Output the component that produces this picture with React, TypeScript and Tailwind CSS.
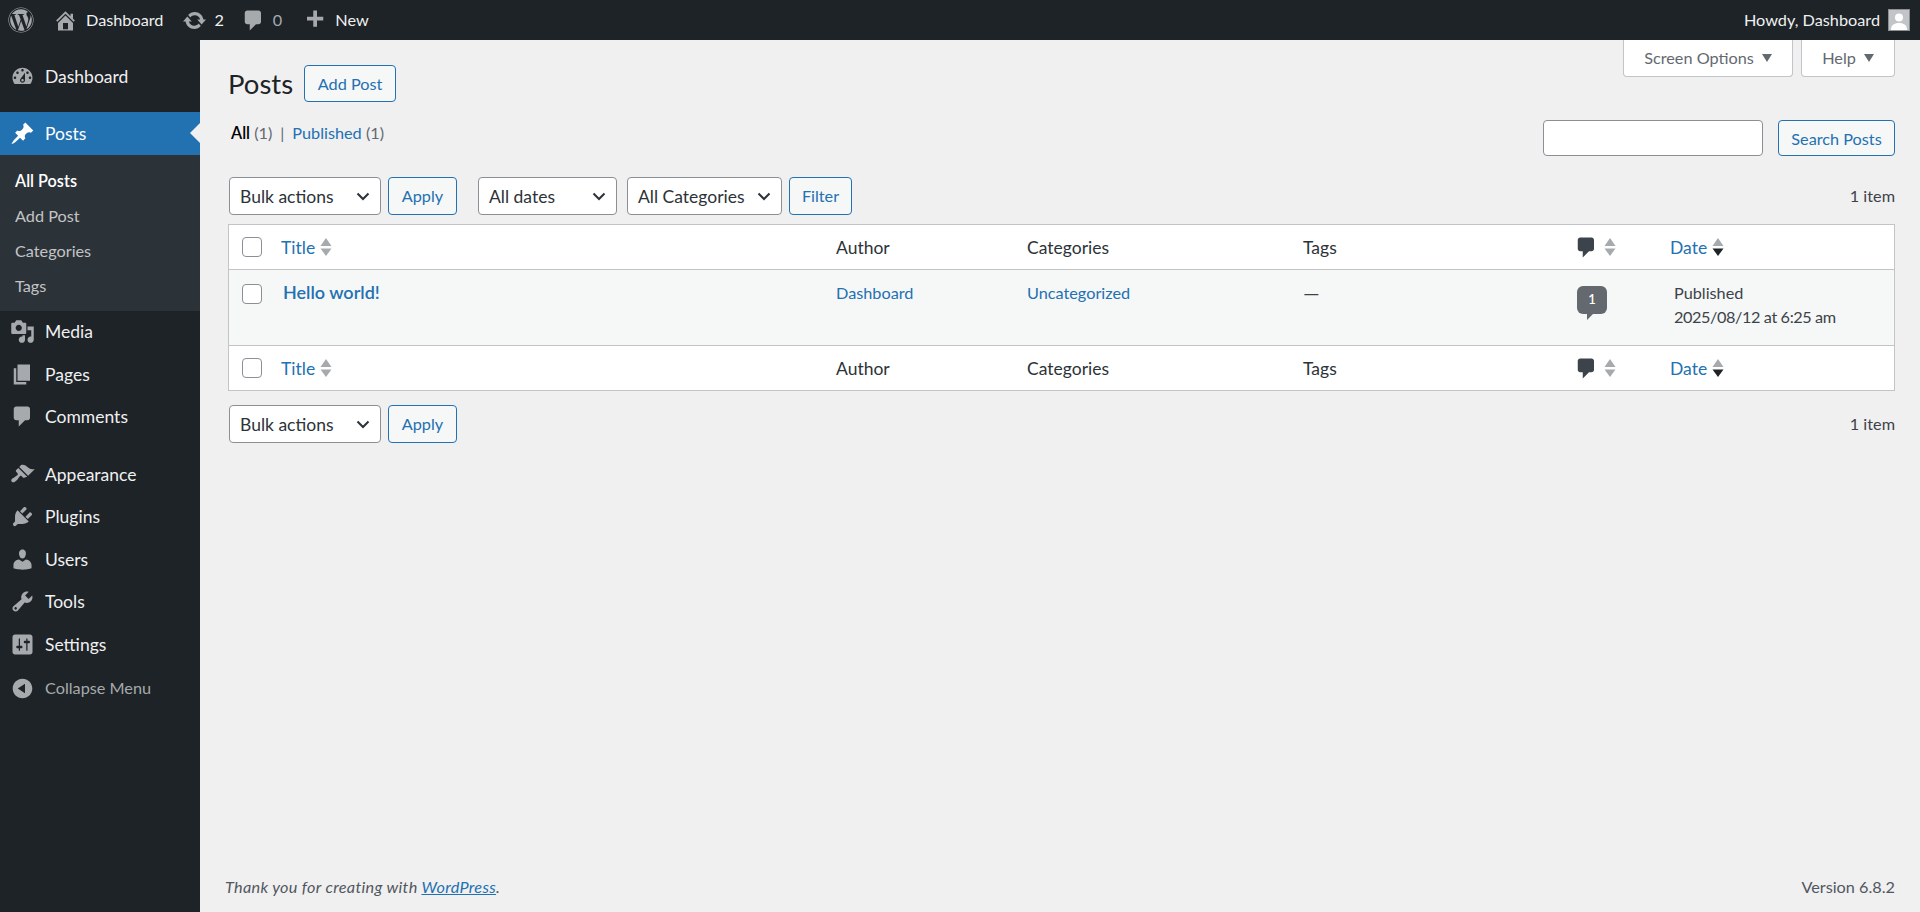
import React from 'react';
import { FaWordpress } from 'react-icons/fa';

// dashicons paths, 20x20 grid
const icons = {
  dashboard: 'M3.76 16h12.48c1.1-1.37 1.76-3.11 1.76-5 0-4.42-3.58-8-8-8s-8 3.58-8 8c0 1.89.66 3.63 1.76 5zM10 4c.55 0 1 .45 1 1s-.45 1-1 1-1-.45-1-1 .45-1 1-1zM6 6c.55 0 1 .45 1 1s-.45 1-1 1-1-.45-1-1 .45-1 1-1zm8 0c.55 0 1 .45 1 1s-.45 1-1 1-1-.45-1-1 .45-1 1-1zm-5.37 5.55L12 7v6c0 1.1-.9 2-2 2s-2-.9-2-2c0-.57.24-1.08.63-1.45zM4 10c.55 0 1 .45 1 1s-.45 1-1 1-1-.45-1-1 .45-1 1-1zm12 0c.55 0 1 .45 1 1s-.45 1-1 1-1-.45-1-1 .45-1 1-1zm-5 3c0-.55-.45-1-1-1s-1 .45-1 1 .45 1 1 1 1-.45 1-1z',
  post: 'M10.44 3.02l1.82-1.82 6.36 6.35-1.83 1.82c-1.05-.68-2.48-.57-3.41.36l-.75.75c-.92.93-1.04 2.35-.35 3.41l-1.83 1.82-2.41-2.41-2.8 2.79c-.42.42-3.38 2.71-3.8 2.29s1.86-3.39 2.28-3.81l2.79-2.79L4.1 9.36l1.83-1.82c1.05.69 2.48.57 3.4-.36l.75-.75c.93-.92 1.05-2.35.36-3.41z',
  media: 'M13 11V4c0-.55-.45-1-1-1h-1.67L9 1H5L3.67 3H2c-.55 0-1 .45-1 1v7c0 .55.45 1 1 1h10c.55 0 1-.45 1-1zM7 4.5c1.38 0 2.5 1.12 2.5 2.5S8.38 9.5 7 9.5 4.5 8.38 4.5 7 5.62 4.5 7 4.5zM14 6h5v10.5c0 1.38-1.12 2.5-2.5 2.5S14 17.88 14 16.5s1.12-2.5 2.5-2.5c.17 0 .34.02.5.05V9h-3V6zm-4 8.05V13h2v3.5c0 1.38-1.12 2.5-2.5 2.5S7 17.88 7 16.5 8.12 14 9.5 14c.17 0 .34.02.5.05z',
  page: 'M6 15V2h10v13H6zm-1 1h8v2H3V5h2v11z',
  comment: 'M5 2h9c1.1 0 2 .9 2 2v7c0 1.1-.9 2-2 2h-2l-5 5v-5H5c-1.1 0-2-.9-2-2V4c0-1.1.9-2 2-2z',
  appearance: 'M14.48 11.06L7.41 3.99l1.5-1.5c.5-.56 2.3-.47 3.51.32 1.21.8 1.43 1.28 2.91 2.1 1.18.64 2.45 1.26 4.45.85zm-.71.71L6.7 4.7 4.93 6.47c-.39.39-.39 1.02 0 1.41l1.06 1.06c.39.39.39 1.03 0 1.42-.6.6-1.43 1.11-2.21 1.69-.35.26-.7.53-1.01.84C1.43 13.23.4 14.75 1.5 15.85c1.08 1.08 2.57.03 3.9-1.26.31-.31.58-.66.85-1.02.57-.78 1.08-1.61 1.69-2.21.39-.39 1.02-.39 1.41 0l1.06 1.06c.39.39 1.02.39 1.41 0z',
  plugins: 'M13.11 4.36L9.87 7.6 8 5.73l3.24-3.24c.35-.34 1.05-.2 1.56.32.52.51.66 1.21.31 1.55zm-8 1.77l.91-1.12 9.01 9.01-1.19.84c-.71.71-2.63 1.16-3.82 1.16H6.14L4.9 17.26c-.59.59-1.54.59-2.12 0-.59-.58-.59-1.53 0-2.12l1.24-1.24v-3.88c0-1.13.4-3.19 1.09-3.89zm7.26 3.97l3.24-3.24c.34-.35 1.04-.21 1.55.31.52.51.66 1.21.31 1.55l-3.24 3.25z',
  users: 'M10 9.25c-2.27 0-2.73-3.44-2.73-3.44C7 4.02 7.82 2 9.97 2c2.16 0 2.98 2.02 2.71 3.81 0 0-.41 3.44-2.68 3.44zm0 2.57L12.72 10c2.39 0 4.52 2.33 4.52 4.53v2.49s-3.65 1.13-7.24 1.13c-3.65 0-7.24-1.13-7.24-1.13v-2.49c0-2.25 1.94-4.48 4.47-4.48z',
  tools: 'M16.68 9.77c-1.34 1.34-3.3 1.67-4.95.99l-5.41 6.52c-.99.99-2.59.99-3.58 0s-.99-2.59 0-3.57l6.52-5.42c-.68-1.65-.35-3.61.99-4.95 1.28-1.28 3.12-1.62 4.72-1.06l-2.89 2.89 2.82 2.82 2.86-2.87c.53 1.58.18 3.39-1.08 4.65zM3.81 16.21c.4.39 1.04.39 1.43 0 .4-.4.4-1.04 0-1.43-.39-.4-1.03-.4-1.43 0-.39.39-.39 1.03 0 1.43z',
  settings: 'M18 16V4c0-1.1-.9-2-2-2H4c-1.1 0-2 .9-2 2v12c0 1.1.9 2 2 2h12c1.1 0 2-.9 2-2zM8 11h1c.55 0 1 .45 1 1s-.45 1-1 1H8v1.5c0 .28-.22.5-.5.5s-.5-.22-.5-.5V13H6c-.55 0-1-.45-1-1s.45-1 1-1h1V5.5c0-.28.22-.5.5-.5s.5.22.5.5V11zm5-2h-1c-.55 0-1-.45-1-1s.45-1 1-1h1V5.5c0-.28.22-.5.5-.5s.5.22.5.5V7h1c.55 0 1 .45 1 1s-.45 1-1 1h-1v5.5c0 .28-.22.5-.5.5s-.5-.22-.5-.5V9z',
  collapse: 'M10 2.16c4.33 0 7.84 3.51 7.84 7.84s-3.51 7.84-7.84 7.84S2.16 14.33 2.16 10 5.71 2.16 10 2.16zm2 11.72V6.12L6.18 9.97z',
  home: 'M16 8.5l1.53 1.53-1.06 1.06L10 4.62l-6.47 6.47-1.06-1.06L10 2.5l4 4v-2h2v4zm-6-2.46l6 5.99V18H4v-5.97zM12 17v-5H8v5h4z',
  update: 'M10.2 3.28c3.53 0 6.43 2.61 6.92 6h2.08l-3.5 4-3.5-4h2.32c-.45-1.97-2.21-3.45-4.32-3.45-1.45 0-2.73.71-3.54 1.78L4.95 5.66C6.23 4.2 8.11 3.28 10.2 3.28zm-.4 13.44c-3.52 0-6.43-2.61-6.92-6H.8l3.5-4c1.17 1.33 2.33 2.67 3.5 4H5.48c.45 1.97 2.21 3.45 4.32 3.45 1.45 0 2.73-.71 3.54-1.78l1.71 1.95c-1.28 1.46-3.15 2.38-5.25 2.38z',
  plus: 'M17 7v3h-5v5H9v-5H4V7h5V2h3v5h5z',
};

const Dashicon = ({ name, className }: { name: keyof typeof icons; className?: string }) => (
  <svg viewBox="0 0 20 20" fill="currentColor" className={className}>
    <path d={icons[name]} />
  </svg>
);

const menuTop: { icon: keyof typeof icons; label: string }[][] = [
  [
    { icon: 'media', label: 'Media' },
    { icon: 'page', label: 'Pages' },
    { icon: 'comment', label: 'Comments' },
  ],
  [
    { icon: 'appearance', label: 'Appearance' },
    { icon: 'plugins', label: 'Plugins' },
    { icon: 'users', label: 'Users' },
    { icon: 'tools', label: 'Tools' },
    { icon: 'settings', label: 'Settings' },
  ],
];

const MenuItem = ({ icon, label }: { icon: keyof typeof icons; label: string }) => (
  <div className="flex h-[42.5px] items-center gap-[10px] pl-[10px] text-[17.5px] text-[#f0f0f1]">
    <Dashicon name={icon} className="h-[25px] w-[25px] shrink-0 text-[#a7aaad]" />
    <span className="mt-[1px]">{label}</span>
  </div>
);

function AdminBar() {
  return (
    <header className="flex h-10 shrink-0 items-center justify-between bg-[#1d2327] text-[16.25px] text-[#f0f0f1]">
      <div className="flex items-center">
        <FaWordpress className="ml-[8px] h-[26px] w-[26px] text-[#a7aaad]" />
        <Dashicon name="home" className="ml-[19px] h-[25px] w-[25px] text-[#a7aaad]" />
        <span className="ml-[8px]">Dashboard</span>
        <Dashicon name="update" className="ml-[19px] h-[25px] w-[25px] text-[#a7aaad]" />
        <span className="ml-[7px]">2</span>
        <Dashicon name="comment" className="ml-[17px] h-[25px] w-[25px] text-[#a7aaad]" />
        <span className="ml-[7px] text-[#a7aaad]">0</span>
        <Dashicon name="plus" className="ml-[20px] h-[25px] w-[25px] text-[#a7aaad]" />
        <span className="ml-[8px]">New</span>
      </div>
      <div className="mr-[10px] flex items-center gap-[8px]">
        <span>Howdy, Dashboard</span>
        <div className="flex h-[22px] w-[22px] items-end justify-center overflow-hidden border border-[#8c8f94] bg-[#c3c4c7]">
          <svg viewBox="0 0 20 20" fill="#ffffff" className="h-[20px] w-[20px]">
            <circle cx="10" cy="7.5" r="4" />
            <path d="M2 20c0-5 3-7 8-7s8 2 8 7z" />
          </svg>
        </div>
      </div>
    </header>
  );
}

function Sidebar() {
  return (
    <aside className="flex w-[200px] shrink-0 flex-col bg-[#1d2327] pt-[15px]">
      <MenuItem icon="dashboard" label="Dashboard" />
      <div className="mt-[14.5px] flex h-[42.5px] items-center gap-[10px] bg-[#2271b1] pl-[10px] text-[17.5px] text-white">
        <Dashicon name="post" className="h-[25px] w-[25px] shrink-0" />
        <span className="mt-[1px]">Posts</span>
        <div className="ml-auto h-0 w-0 border-y-[10px] border-r-[10px] border-y-transparent border-r-[#f0f0f1]" />
      </div>
      <div className="h-[156px] bg-[#2c3338] pt-[8px] text-[16.25px] leading-[35.3px] text-[#c3c4c7]">
        <div className="pl-[15px] font-semibold text-white">All Posts</div>
        <div className="pl-[15px]">Add Post</div>
        <div className="pl-[15px]">Categories</div>
        <div className="pl-[15px]">Tags</div>
      </div>
      {menuTop[0].map((m) => (
        <MenuItem key={m.label} {...m} />
      ))}
      <div className="h-[15px]" />
      {menuTop[1].map((m) => (
        <MenuItem key={m.label} {...m} />
      ))}
      <div className="flex h-[45px] items-center gap-[10px] pl-[10px] text-[16.25px] text-[#a7aaad]">
        <Dashicon name="collapse" className="h-[25px] w-[25px] shrink-0" />
        <span>Collapse Menu</span>
      </div>
    </aside>
  );
}

const OutlineButton = ({ children, className }: { children: React.ReactNode; className: string }) => (
  <button className={`flex items-center justify-center rounded-[4px] border border-[#2271b1] bg-[#f6f7f7] text-[16.25px] text-[#2271b1] ${className}`}>
    {children}
  </button>
);

const Dropdown = ({ label, width }: { label: string; width: string }) => (
  <div className={`flex h-[38px] items-center justify-between rounded-[4px] border border-[#8c8f94] bg-white pl-[10px] pr-[9px] text-[17.5px] text-[#2c3338] ${width}`}>
    <span className="mt-[2px]">{label}</span>
    <svg viewBox="0 0 16 16" fill="none" stroke="#2c3338" strokeWidth="2" className="h-[16px] w-[16px]">
      <path d="M2.5 5.500L8 11l5.500-5.500" />
    </svg>
  </div>
);

const SortArrows = ({ active }: { active?: boolean }) => (
  <svg viewBox="0 0 12 18" className="ml-[5px] h-[18px] w-[12px]">
    <path d="M.5 8L6 0l5.500 8z" fill="#a7aaad" />
    <path d="M.5 10.500h11l-5.500 7.500z" fill={active ? '#1d2327' : '#a7aaad'} />
  </svg>
);

const Checkbox = () => <div className="h-[20px] w-[20px] rounded-[4px] border border-[#8c8f94] bg-white" />;

const grid = 'grid grid-cols-[41px_555px_191px_276px_274px_95px_1fr]';

const HeadRow = ({ className }: { className: string }) => (
  <div className={`${grid} h-[45px] items-center bg-white text-[16.25px] text-[#2c3338] ${className}`}>
    <div className="pl-[13px]">
      <Checkbox />
    </div>
    <div className="flex items-center pl-[11px] text-[17.5px] text-[#2271b1]">
      <span className="mt-[2px]">Title</span>
      <SortArrows />
    </div>
    <div className="mt-[2px] pl-[11px] text-[17.5px]">Author</div>
    <div className="mt-[2px] pl-[11px] text-[17.5px]">Categories</div>
    <div className="mt-[2px] pl-[11px] text-[17.5px]">Tags</div>
    <div className="flex items-center pl-[8px]">
      <Dashicon name="comment" className="h-[25px] w-[25px] text-[#3c434a]" />
      <SortArrows />
    </div>
    <div className="flex items-center pl-[9px] text-[17.5px] text-[#2271b1]">
      <span className="mt-[2px]">Date</span>
      <SortArrows active />
    </div>
  </div>
);

const BulkBar = () => (
  <div className="flex items-center gap-[7px]">
    <Dropdown label="Bulk actions" width="w-[152px]" />
    <OutlineButton className="h-[38px] w-[69px]">Apply</OutlineButton>
  </div>
);

export default function App() {
  return (
    <div className="flex h-[912px] flex-col overflow-hidden bg-[#f0f0f1] font-['Lato',sans-serif] text-[#3c434a]">
      <AdminBar />
      <div className="flex min-h-0 flex-1">
        <Sidebar />
        <main className="flex min-w-0 flex-1 flex-col pl-[25px] pr-[25px]">
          <div className="pl-[3px]">
            <div className="flex items-start justify-between">
              <div className="mt-[25px] flex items-center">
                <h1 className="w-[66px] text-[27.5px] leading-[37px] text-[#1d2327]">Posts</h1>
                <OutlineButton className="ml-[10px] h-[37px] w-[92px] pt-[2px]">Add Post</OutlineButton>
              </div>
              <div className="flex gap-[8px] text-[16.25px] text-[#646970]">
                <div className="flex h-[37px] w-[170px] items-center justify-center gap-[8px] rounded-b-[4px] border border-t-0 border-[#c3c4c7] bg-white">
                  Screen Options
                  <div className="h-0 w-0 border-x-[5px] border-t-[8px] border-x-transparent border-t-[#646970]" />
                </div>
                <div className="flex h-[37px] w-[94px] items-center justify-center gap-[8px] rounded-b-[4px] border border-t-0 border-[#c3c4c7] bg-white">
                  Help
                  <div className="h-0 w-0 border-x-[5px] border-t-[8px] border-x-transparent border-t-[#646970]" />
                </div>
              </div>
            </div>

            <div className="mt-[18px] flex items-start justify-between">
              <div className="pl-[3px] pt-[1px] text-[16.25px] text-[#646970]">
                <span className="font-semibold text-black">All</span> (1)
                <span className="mx-[8px]">|</span>
                <span className="text-[#2271b1]">Published</span> (1)
              </div>
              <div className="flex items-center gap-[15px]">
                <div className="h-[36px] w-[220px] rounded-[4px] border border-[#8c8f94] bg-white" />
                <OutlineButton className="h-[36px] w-[117px] pt-[2px]">Search Posts</OutlineButton>
              </div>
            </div>

            <div className="ml-[1px] mt-[21px] flex h-[38px] items-center">
              <BulkBar />
              <div className="ml-[21px] flex items-center gap-[10px]">
                <Dropdown label="All dates" width="w-[139px]" />
                <Dropdown label="All Categories" width="w-[155px]" />
              </div>
              <OutlineButton className="ml-[7px] h-[38px] w-[63px]">Filter</OutlineButton>
              <span className="ml-auto text-[16.25px]">1 item</span>
            </div>

            <div className="mt-[9px] border border-[#c3c4c7]">
              <HeadRow className="border-b border-[#c3c4c7]" />
              <div className={`${grid} h-[75px] bg-[#f6f7f7] text-[16.25px]`}>
                <div className="pl-[13px] pt-[14px]">
                  <Checkbox />
                </div>
                <div className="pl-[13px] pt-[9px] text-[18px] font-semibold text-[#2271b1]">Hello world!</div>
                <div className="pl-[11px] pt-[11px] text-[#2271b1]">Dashboard</div>
                <div className="pl-[11px] pt-[11px] text-[#2271b1]">Uncategorized</div>
                <div className="pl-[11px] pt-[11px] text-[21px] leading-[24px]">—</div>
                <div className="pl-[11px] pt-[16px]">
                  <div className="flex h-[28px] w-[30px] items-center justify-center rounded-[6px] bg-[#646970] text-[13px] font-semibold text-white">1</div>
                  <div className="ml-[10px] h-0 w-0 border-r-[6px] border-t-[6px] border-r-transparent border-t-[#646970]" />
                </div>
                <div className="pl-[13px] pt-[11px] leading-[24px]">
                  <div>Published</div>
                  <div className="tracking-[-0.4px]">2025/08/12 at 6:25 am</div>
                </div>
              </div>
              <HeadRow className="border-t border-[#c3c4c7]" />
            </div>

            <div className="ml-[1px] mt-[14px] flex h-[38px] items-center">
              <BulkBar />
              <span className="ml-auto text-[16.25px]">1 item</span>
            </div>
          </div>

          <footer className="mt-auto flex items-center justify-between pb-[13px] text-[16.25px] text-[#50575e]">
            <span className="italic tracking-[0.3px]">
              Thank you for creating with <span className="text-[#2271b1] underline">WordPress</span>.
            </span>
            <span>Version 6.8.2</span>
          </footer>
        </main>
      </div>
    </div>
  );
}
